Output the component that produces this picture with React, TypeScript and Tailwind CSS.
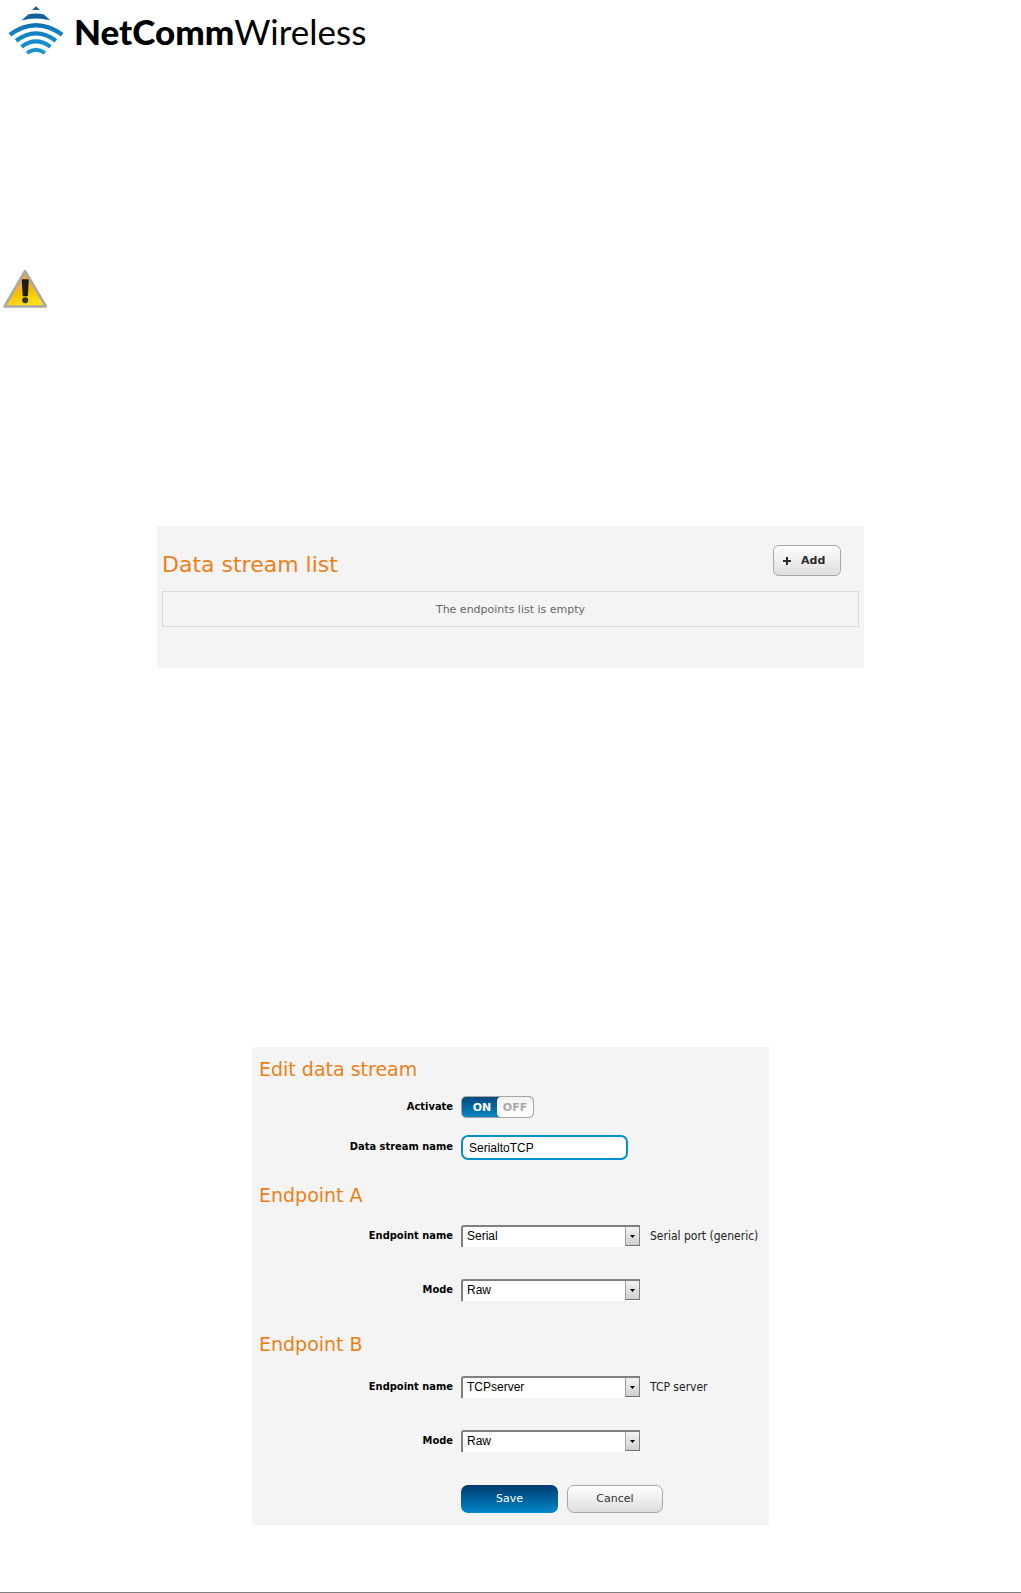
import { useState } from "react";
import type { ReactNode } from "react";

function LogoMark() {
    return (
        <svg className="h-[50px] w-[56px]" viewBox="0 0 56 50" fill="none" stroke="url(#wave)">
            <defs>
                <linearGradient id="wave" gradientUnits="userSpaceOnUse" x1="0" y1="0" x2="0" y2="50">
                    <stop offset="0" stopColor="#0b4f8a" />
                    <stop offset="0.5" stopColor="#127fbd" />
                    <stop offset="1" stopColor="#179bd7" />
                </linearGradient>
            </defs>
            <path d="M28 0.3 L32 4.3 Q28 3.4 24 4.3 Z" fill="url(#wave)" stroke="none" />
            <path d="M20 8.6 Q28 6.6 36 8.6 L42.5 14.6 Q28 10.2 13.5 14.6 Z" fill="url(#wave)" stroke="none" />
            <path d="M1.8 28.8 Q28 9.6 54.2 28.8" strokeWidth="4.4" />
            <path d="M8 34.8 Q28 19.8 48 34.8" strokeWidth="4.2" />
            <path d="M13.5 40.8 Q28 30 42.5 40.8" strokeWidth="4" />
            <path d="M19 47 Q28 40.4 37 47" strokeWidth="4" />
        </svg>
    );
}

function WarningIcon() {
    return (
        <svg className="ml-[3px] h-10 w-[45px]" viewBox="0 0 45 40">
            <defs>
                <linearGradient id="warn" x1="0.2" y1="0" x2="0.5" y2="1">
                    <stop offset="0" stopColor="#f39a3c" />
                    <stop offset="0.5" stopColor="#f7b32c" />
                    <stop offset="0.6" stopColor="#f6bd00" />
                    <stop offset="1" stopColor="#fde21a" />
                </linearGradient>
            </defs>
            <path d="M22 2 L43 37.5 H1.5 Z" fill="url(#warn)" stroke="#a9a9a9" strokeWidth="2.5" strokeLinejoin="round" />
            <path d="M19.5 11 H25 L24.2 26.5 H20.4 Z" fill="#1c1c1c" stroke="#1c1c1c" strokeWidth="1.5" strokeLinejoin="round" />
            <circle cx="22.2" cy="31.3" r="3" fill="#333" />
        </svg>
    );
}

function Heading({ children }: { children: ReactNode }) {
    return (
        <h2 className="pl-[7px] text-[19px] leading-6 text-[#ee7f17]">{children}</h2>
    );
}

function Label({ htmlFor, children }: { htmlFor: string; children: ReactNode }) {
    return (
        <label
            htmlFor={htmlFor}
            className="w-[201px] shrink-0 text-right font-['DejaVu_Sans_Condensed','DejaVu_Sans',sans-serif] text-[11px] font-bold text-black"
        >
            {children}
        </label>
    );
}

function SelectRow({ id, label, options, note }: { id: string; label: string; options: string[]; note?: string }) {
    return (
        <div className="flex h-[22px] items-center">
            <Label htmlFor={id}>{label}</Label>
            <div className="relative ml-2 h-[22px] w-[179px] shrink-0">
                <select
                    id={id}
                    className="block h-full w-full appearance-none rounded-tl-[3px] border-t-2 border-l-2 border-[#808080] bg-white pb-1 pl-1 font-['Liberation_Sans',Arial,sans-serif] text-[12px] text-black outline-none"
                >
                    {options.map((o) => (
                        <option key={o}>{o}</option>
                    ))}
                </select>
                {/* Drop-down arrow */}
                <span className="pointer-events-none absolute top-[2px] right-0 bottom-px flex w-[15px] items-center justify-center border-r border-b border-l border-r-[#808080] border-b-[#707070] border-l-[#a0a0a0] bg-linear-to-b from-[#f4f4f4] to-[#cfcfcf]">
                    <svg className="h-[3px] w-[5px]" viewBox="0 0 5 3">
                        <path d="M0 0 H5 L2.5 3 Z" fill="#000" />
                    </svg>
                </span>
            </div>
            {note && (
                <span className="ml-[10px] font-['DejaVu_Sans_Condensed','DejaVu_Sans',sans-serif] text-[12px] whitespace-nowrap text-[#222]">
                    {note}
                </span>
            )}
        </div>
    );
}

function Toggle({ id }: { id: string }) {
    const [on, setOn] = useState(true);

    return (
        <button
            id={id}
            type="button"
            role="switch"
            aria-checked={on}
            onClick={() => setOn(!on)}
            className="ml-2 flex h-[22px] w-[73px] overflow-hidden rounded-[5px] border border-[#a6a6a6] bg-linear-to-b from-[#034a80] to-[#0a86c2] text-[11px] leading-[22px] font-bold"
        >
            <span className="w-[35px] pl-[5px] text-center text-white">ON</span>
            <span className="flex-1 rounded-[4px] bg-linear-to-b from-[#f2f2f2] to-white text-center text-[#a8a8a8]">OFF</span>
        </button>
    );
}

export default function App() {
    const [name, setName] = useState("SerialtoTCP");

    return (
        <div className="flex min-h-screen flex-col bg-white font-['DejaVu_Sans',Verdana,sans-serif]">
            <header className="flex items-center px-2 pt-[6px]">
                <LogoMark />
                <span className="ml-[10px] font-['Lato',sans-serif] text-[35px] leading-[50px] text-black">
                    <span className="font-black">NetComm</span>
                    Wireless
                </span>
            </header>

            <div className="mt-[213px]">
                <WarningIcon />
            </div>

            {/* Data stream list */}
            <section className="mx-auto mt-[217px] h-[142px] w-full max-w-[707px] bg-[#f4f4f4] px-[5px] pt-[19px]">
                <div className="flex h-[46px] items-start justify-between pr-[18px]">
                    <h2 className="pt-1 text-[22px] leading-8 text-[#ee7f17]">Data stream list</h2>
                    <button
                        type="button"
                        className="flex h-[31px] w-[68px] items-center gap-[10px] rounded-[6px] border border-[#a9a9a9] bg-linear-to-b from-white to-[#dedede] pl-[9px] text-[11px] font-bold text-[#2b2b2b]"
                    >
                        <svg className="h-2 w-2" viewBox="0 0 8 8" fill="#2b2b2b">
                            <path d="M3 0h2v3h3v2H5v3H3V5H0V3h3z" />
                        </svg>
                        <span className="pt-px">Add</span>
                    </button>
                </div>
                <p className="flex h-9 items-center justify-center border border-[#dadada] pt-[2px] text-[11px] text-[#666]">
                    The endpoints list is empty
                </p>
            </section>

            {/* Edit form */}
            <form
                onSubmit={(e) => e.preventDefault()}
                className="mx-auto mt-[379px] w-full max-w-[517px] bg-[#f4f4f4] pt-[10px] pb-3"
            >
                <Heading>Edit data stream</Heading>
                <div className="mt-[15px] flex h-[22px] items-center">
                    <Label htmlFor="activate">Activate</Label>
                    <Toggle id="activate" />
                </div>
                <div className="mt-[17px] flex h-[25px] items-center">
                    <Label htmlFor="stream-name">Data stream name</Label>
                    <input
                        id="stream-name"
                        type="text"
                        value={name}
                        onChange={(e) => setName(e.target.value)}
                        className="ml-2 h-[25px] w-[167px] rounded-[7px] border-2 border-[#0090cc] bg-white px-[6px] font-['Liberation_Sans',Arial,sans-serif] text-[12px] text-black outline-none"
                    />
                </div>

                <div className="mt-[23px] mb-[18px]">
                    <Heading>Endpoint A</Heading>
                </div>
                <div className="flex flex-col gap-8">
                    <SelectRow id="a-name" label="Endpoint name" options={["Serial", "TCPserver"]} note="Serial port (generic)" />
                    <SelectRow id="a-mode" label="Mode" options={["Raw"]} />
                </div>

                <div className="mt-[31px] mb-[20px]">
                    <Heading>Endpoint B</Heading>
                </div>
                <div className="flex flex-col gap-8">
                    <SelectRow id="b-name" label="Endpoint name" options={["TCPserver", "Serial"]} note="TCP server" />
                    <SelectRow id="b-mode" label="Mode" options={["Raw"]} />
                </div>

                <div className="mt-[33px] ml-[209px] flex gap-[9px]">
                    <button
                        type="submit"
                        className="h-7 w-[97px] rounded-[7px] bg-linear-to-b from-[#003a6e] to-[#0089c9] text-[11px] text-white"
                    >
                        Save
                    </button>
                    <button
                        type="button"
                        className="h-7 w-[96px] rounded-[7px] border border-[#a9a9a9] bg-linear-to-b from-white to-[#dedede] text-[11px] text-[#333]"
                    >
                        Cancel
                    </button>
                </div>
            </form>

            <footer className="mt-[67px] border-t border-[#808080]" />
        </div>
    );
}
